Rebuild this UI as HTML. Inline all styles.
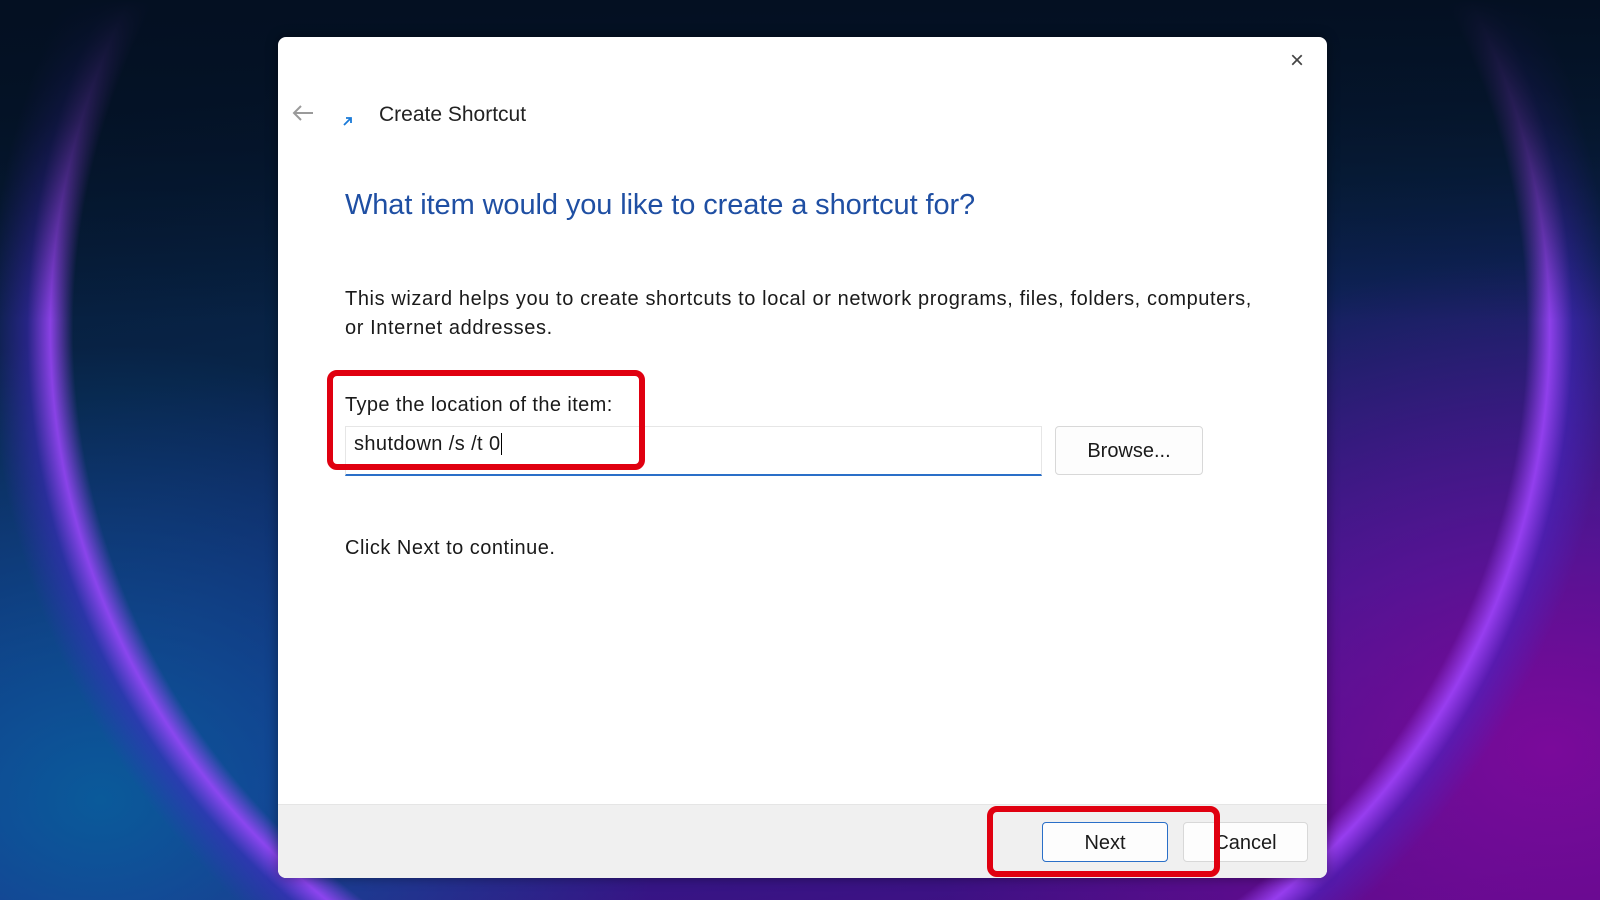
<!DOCTYPE html>
<html><head><meta charset="utf-8"><style>
*{margin:0;padding:0;box-sizing:border-box}
body{width:1600px;height:900px;overflow:hidden;position:relative;font-family:"Liberation Sans",sans-serif;
background:
linear-gradient(180deg, rgba(4,16,34,1) 0px, rgba(4,16,34,.7) 120px, rgba(4,16,34,0) 320px),
radial-gradient(ellipse 765px 750px at 800px 330px, rgba(0,0,0,0) 0 95%, rgba(160,70,255,.85) 98%, rgba(70,40,200,.5) 101%, rgba(0,0,0,0) 106%),
radial-gradient(ellipse 900px 700px at 1550px 750px, #7a0a9a 0%, rgba(90,10,140,0) 70%),
radial-gradient(ellipse 800px 650px at 100px 800px, #0a5a9a 0%, rgba(10,60,120,0) 70%),
linear-gradient(170deg,#041428 0%,#082448 35%,#22208a 70%,#4a0a80 100%);}
.dlg{position:absolute;left:278px;top:37px;width:1049px;height:841px;background:#fff;border-radius:8px;overflow:hidden;box-shadow:0 0 12px rgba(0,0,0,.4)}
.t{position:absolute;white-space:nowrap;color:#1a1a1a}
.footer{position:absolute;left:0;top:767px;width:100%;height:74px;background:#f0f0f0;border-top:1px solid #e5e5e5}
.btn{position:absolute;background:#fdfdfd;border:1px solid #d8d8d8;border-radius:4px;font-size:20px;text-align:center;color:#1a1a1a}
.red{position:absolute;border:6px solid #e00010;border-radius:10px}
</style></head><body>
<div class="dlg">
 <div class="t" style="left:1012px;top:10px;font-size:24px;color:#444">×</div>
 <svg style="position:absolute;left:13px;top:66px" width="24" height="20" viewBox="0 0 24 20"><path d="M22 10H3M10 3L3 10l7 7" fill="none" stroke="#9a9a9a" stroke-width="2"/></svg>
 <svg style="position:absolute;left:63px;top:78px" width="12" height="12" viewBox="0 0 12 12"><rect width="12" height="12" fill="#fff"/><path d="M3 10L9 4M5 3h5v5" fill="none" stroke="#1a7ad8" stroke-width="1.8"/></svg>
 <div class="t" style="left:101px;top:66px;font-size:21px;color:#222">Create Shortcut</div>
 <div class="t" style="left:67px;top:152px;font-size:29px;color:#1f4fa3;letter-spacing:-0.1px">What item would you like to create a shortcut for?</div>
 <div class="t" style="left:67px;top:248px;font-size:20px;line-height:29px;letter-spacing:0.6px">This wizard helps you to create shortcuts to local or network programs, files, folders, computers,<br>or Internet addresses.</div>
 <div class="t" style="left:67px;top:357px;font-size:20px;letter-spacing:0.4px">Type the location of the item:</div>
 <div style="position:absolute;left:67px;top:389px;width:697px;height:50px;background:#fff;border:1px solid #e6e6e6;border-bottom:2px solid #2a6fc8"></div>
 <div class="t" style="left:76px;top:396px;font-size:20px;letter-spacing:0.4px">shutdown /s /t 0<span style="border-left:1px solid #000;margin-left:1px"></span></div>
 <div class="btn" style="left:777px;top:389px;width:148px;height:49px;line-height:49px">Browse...</div>
 <div class="t" style="left:67px;top:500px;font-size:20px;letter-spacing:0.5px">Click Next to continue.</div>
 <div class="footer"></div>
 <div class="btn" style="left:764px;top:785px;width:126px;height:40px;line-height:40px;border-color:#2a6fc8">Next</div>
 <div class="btn" style="left:905px;top:785px;width:125px;height:40px;line-height:40px">Cancel</div>
</div>
<div class="red" style="left:327px;top:370px;width:318px;height:100px"></div>
<div class="red" style="left:987px;top:806px;width:233px;height:71px"></div>
</body></html>
